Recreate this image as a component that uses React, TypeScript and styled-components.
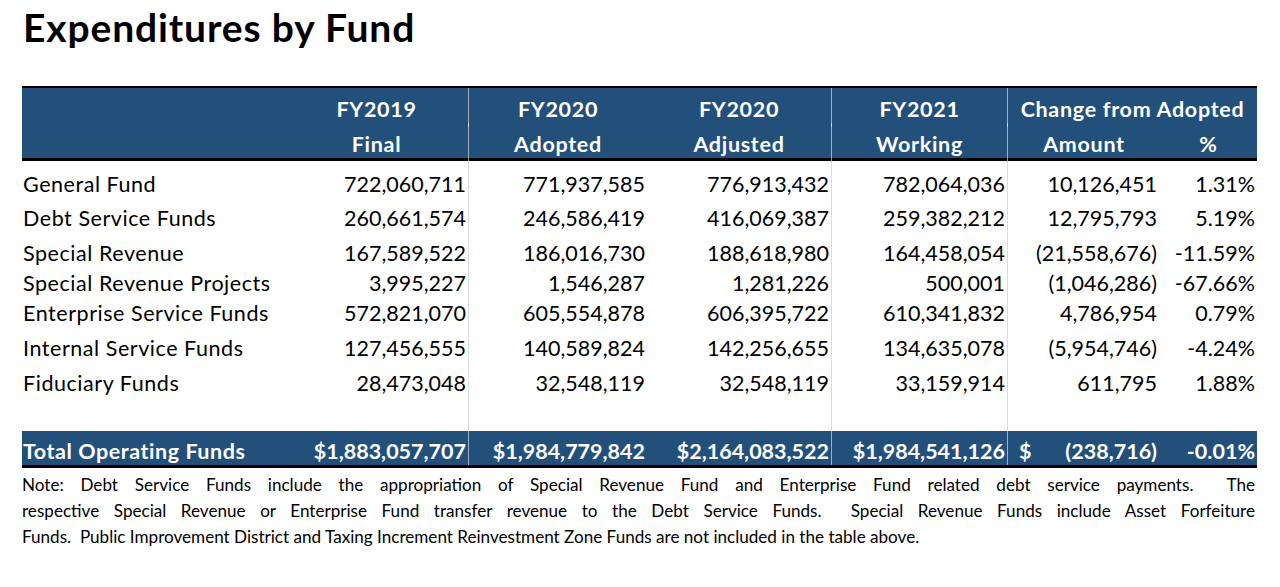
import React from "react";
import styled, { createGlobalStyle } from "styled-components";

const GlobalStyle = createGlobalStyle`
  html, body {
    margin: 0;
    padding: 0;
    background: #fff;
  }
  body {
    font-family: Lato, "Liberation Sans", sans-serif;
    color: #000;
  }
`;

const COLS = "263px 184px 178px 185px 176px 152px 97px";
const BLUE = "#23507a";

const Page = styled.div`
  width: 1235px;
  padding: 3px 0 0 22px;
`;

const Title = styled.h1`
  margin: 0 0 35px 1px;
  font-size: 39px;
  line-height: 48px;
  font-weight: 700;
  letter-spacing: 0.85px;
  color: #000;
`;

const HeaderBand = styled.div`
  background: ${BLUE};
  border-top: 2px solid #000;
  border-bottom: 3px solid #000;
  height: 75px;
  box-sizing: border-box;
  color: #fff;
  font-weight: 700;
  font-size: 21.5px;
`;

const Row = styled.div<{ $h: number }>`
  display: grid;
  grid-template-columns: ${COLS};
  height: ${(p) => p.$h}px;
  line-height: ${(p) => p.$h}px;
`;

const HeadCell = styled.div<{ $sep?: boolean; $span?: number }>`
  text-align: center;
  padding-top: 4px;
  letter-spacing: 0.7px;
  grid-column: span ${(p) => p.$span ?? 1};
  border-right: ${(p) => (p.$sep ? "1px solid rgba(255,255,255,0.55)" : "none")};
  white-space: nowrap;
`;

const Body = styled.div`
  font-size: 21.5px;
`;

const Cell = styled.div<{ $sep?: boolean }>`
  text-align: right;
  padding-right: 2px;
  white-space: nowrap;
  border-right: ${(p) => (p.$sep ? "1px solid #dcdcdc" : "none")};
`;

const AmountCell = styled(Cell)`
  padding-right: 3px;
`;

const Label = styled.div`
  padding-left: 1px;
  letter-spacing: 0.55px;
  white-space: nowrap;
`;

const TotalBand = styled.div`
  background: ${BLUE};
  border-bottom: 3px solid #000;
  color: #fff;
  font-weight: 700;
  font-size: 21.5px;
`;

const TotalRow = styled(Row)`
  padding-top: 6px;
  box-sizing: border-box;
  line-height: 28px;
`;

const TotalCell = styled.div<{ $sep?: boolean }>`
  text-align: right;
  padding-right: 2px;
  margin-top: -6px;
  padding-top: 6px;
  white-space: nowrap;
  border-right: ${(p) => (p.$sep ? "1px solid rgba(255,255,255,0.55)" : "none")};
`;

const Accounting = styled(TotalCell)`
  display: flex;
  justify-content: space-between;
  padding-left: 11px;
  padding-right: 3px;
`;

const Note = styled.div`
  margin-top: 4px;
  width: 1233px;
  font-size: 17.1px;
  line-height: 26px;
`;

const NoteLine = styled.div<{ $justify?: boolean }>`
  text-align: ${(p) => (p.$justify ? "justify" : "left")};
  text-align-last: ${(p) => (p.$justify ? "justify" : "left")};
  white-space: nowrap;
`;

const SEP = [false, true, false, true, true, false, false];

const rows = [
  { name: "General Fund", h: 34, v: ["722,060,711", "771,937,585", "776,913,432", "782,064,036", "10,126,451", "1.31%"] },
  { name: "Debt Service Funds", h: 34, v: ["260,661,574", "246,586,419", "416,069,387", "259,382,212", "12,795,793", "5.19%"] },
  { name: "Special Revenue", h: 36, v: ["167,589,522", "186,016,730", "188,618,980", "164,458,054", "(21,558,676)", "-11.59%"] },
  { name: "Special Revenue Projects", h: 24, v: ["3,995,227", "1,546,287", "1,281,226", "500,001", "(1,046,286)", "-67.66%"] },
  { name: "Enterprise Service Funds", h: 36, v: ["572,821,070", "605,554,878", "606,395,722", "610,341,832", "4,786,954", "0.79%"] },
  { name: "Internal Service Funds", h: 34, v: ["127,456,555", "140,589,824", "142,256,655", "134,635,078", "(5,954,746)", "-4.24%"] },
  { name: "Fiduciary Funds", h: 36, v: ["28,473,048", "32,548,119", "32,548,119", "33,159,914", "611,795", "1.88%"] },
];

function Spacer({ h }: { h: number }) {
  return (
    <Row $h={h}>
      {SEP.map((s, i) => (
        <Cell key={i} $sep={s} />
      ))}
    </Row>
  );
}

export default function App() {
  return (
    <Page>
      <GlobalStyle />
      <Title>Expenditures by Fund</Title>

      <HeaderBand>
        <Row $h={35}>
          <HeadCell />
          <HeadCell $sep>FY2019</HeadCell>
          <HeadCell>FY2020</HeadCell>
          <HeadCell $sep>FY2020</HeadCell>
          <HeadCell $sep>FY2021</HeadCell>
          <HeadCell $span={2}>Change from Adopted</HeadCell>
        </Row>
        <Row $h={35}>
          <HeadCell />
          <HeadCell $sep>Final</HeadCell>
          <HeadCell>Adopted</HeadCell>
          <HeadCell $sep>Adjusted</HeadCell>
          <HeadCell $sep>Working</HeadCell>
          <HeadCell>Amount</HeadCell>
          <HeadCell>%</HeadCell>
        </Row>
      </HeaderBand>

      <Body>
        <Spacer h={6} />
        {rows.map((r) => (
          <Row key={r.name} $h={r.h}>
            <Label>{r.name}</Label>
            {r.v.map((val, i) =>
              i === 4 ? (
                <AmountCell key={i}>{val}</AmountCell>
              ) : (
                <Cell key={i} $sep={SEP[i + 1]}>
                  {val}
                </Cell>
              )
            )}
          </Row>
        ))}
        <Spacer h={30} />
      </Body>

      <TotalBand>
        <TotalRow $h={34}>
          <Label>Total Operating Funds</Label>
          <TotalCell $sep>$1,883,057,707</TotalCell>
          <TotalCell>$1,984,779,842</TotalCell>
          <TotalCell $sep>$2,164,083,522</TotalCell>
          <TotalCell $sep>$1,984,541,126</TotalCell>
          <Accounting>
            <span>$</span>
            <span>(238,716)</span>
          </Accounting>
          <TotalCell>-0.01%</TotalCell>
        </TotalRow>
      </TotalBand>

      <Note>
        <NoteLine $justify>
          Note: Debt Service Funds include the appropriation of Special Revenue Fund and Enterprise Fund related debt service payments.{"\u00a0 "}The
        </NoteLine>
        <NoteLine $justify>
          respective Special Revenue or Enterprise Fund transfer revenue to the Debt Service Funds.{"\u00a0 "}Special Revenue Funds include Asset Forfeiture
        </NoteLine>
        <NoteLine>
          Funds.{"\u00a0 "}Public Improvement District and Taxing Increment Reinvestment Zone Funds are not included in the table above.
        </NoteLine>
      </Note>
    </Page>
  );
}
